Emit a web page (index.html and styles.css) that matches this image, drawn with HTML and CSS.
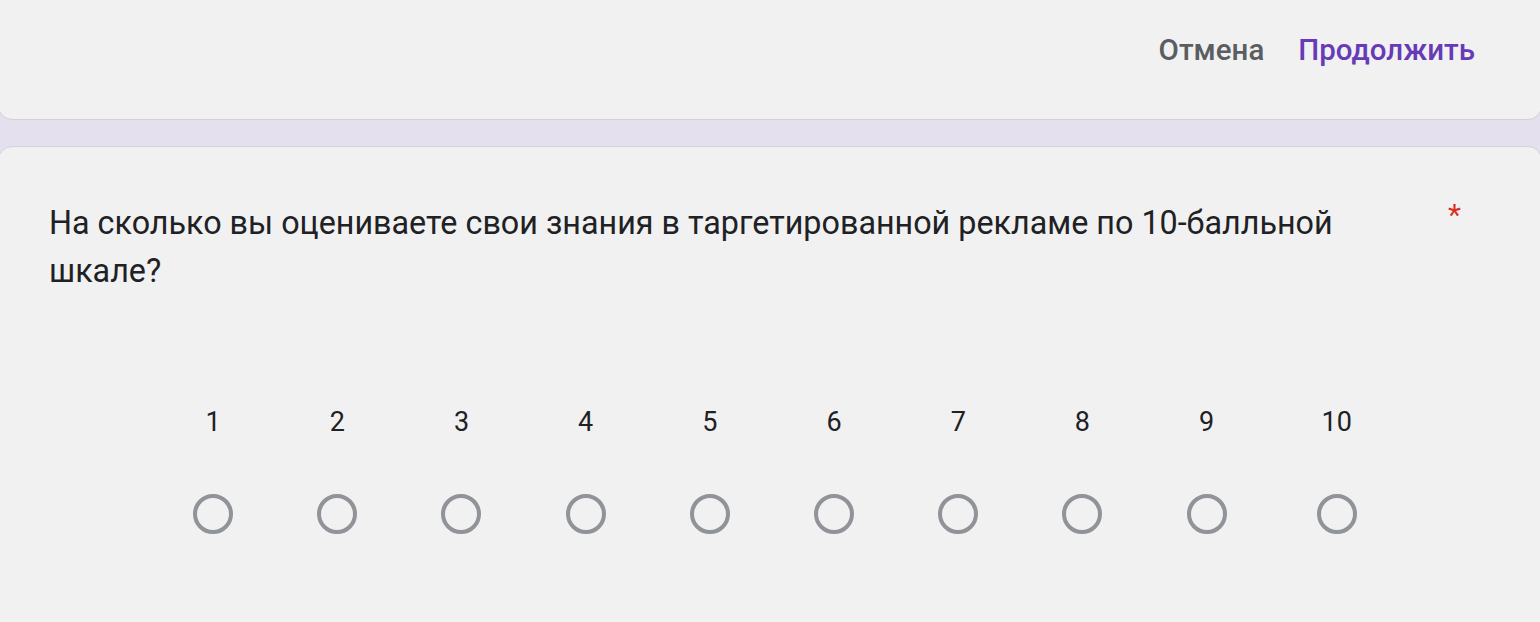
FILE: index.html
```html
<!DOCTYPE html>
<html lang="ru">
  <head>
    <meta charset="UTF-8" />
    <meta name="viewport" content="width=device-width, initial-scale=1.0" />
    <title>Форма</title>
    <link rel="stylesheet" href="styles.css">
  </head>
  <body>
    <div class="card dialog">
      <div class="actions">
        <button class="btn btn-cancel">Отмена</button>
        <button class="btn btn-next">Продолжить</button>
      </div>
    </div>

    <div class="card question">
      <div class="question-head">
        <div class="question-title">На сколько вы оцениваете свои знания в таргетированной рекламе по 10-балльной шкале?</div>
        <span class="required">*</span>
      </div>

      <div class="scale">
        <label class="scale-item"><span class="scale-num">1</span><span class="radio"></span></label>
        <label class="scale-item"><span class="scale-num">2</span><span class="radio"></span></label>
        <label class="scale-item"><span class="scale-num">3</span><span class="radio"></span></label>
        <label class="scale-item"><span class="scale-num">4</span><span class="radio"></span></label>
        <label class="scale-item"><span class="scale-num">5</span><span class="radio"></span></label>
        <label class="scale-item"><span class="scale-num">6</span><span class="radio"></span></label>
        <label class="scale-item"><span class="scale-num">7</span><span class="radio"></span></label>
        <label class="scale-item"><span class="scale-num">8</span><span class="radio"></span></label>
        <label class="scale-item"><span class="scale-num">9</span><span class="radio"></span></label>
        <label class="scale-item"><span class="scale-num">10</span><span class="radio"></span></label>
      </div>
    </div>
  </body>
</html>
```

FILE: styles.css
```css
body {
  font-family: "Roboto", "Noto Sans", sans-serif;
  background-color: #e4e0ed;
  color: #202124;
  margin: 0;
  height: 622px;
  overflow: hidden;
}
.card {
  background-color: #f1f1f1;
  border: 1px solid #d2d0d8;
  border-radius: 14px;
  margin: 0 -2px;
}
.dialog {
  margin-top: -20px;
  height: 140px;
  box-sizing: border-box;
}
.actions {
  display: flex;
  justify-content: flex-end;
  gap: 10px;
  padding: 44px 54px 0 0;
}
.btn {
  font-family: "Roboto", "Noto Sans", sans-serif;
  font-size: 29.5px;
  font-weight: 500;
  background: none;
  border: none;
  padding: 8px 12px;
  cursor: pointer;
}
.btn-cancel {
  color: #5a5d62;
}
.btn-next {
  color: #673ab7;
}
.question {
  margin-top: 26px;
  height: 520px;
  box-sizing: border-box;
  padding: 52px 0 0 50px;
}
.question-head {
  display: flex;
  align-items: flex-start;
  padding-right: 80px;
}
.question-title {
  flex: 1;
  max-width: 1330px;
  font-size: 32.3px;
  line-height: 48px;
}
.required {
  color: #d93025;
  font-size: 30px;
  line-height: 40px;
  margin-left: auto;
  margin-top: -4px;
}
.scale {
  display: flex;
  padding: 111px 0 0 102px;
}
.scale-item {
  width: 124.2px;
  display: flex;
  flex-direction: column;
  align-items: center;
  gap: 56px;
}
.scale-item:last-child {
  margin-left: 6px;
}
.scale-num {
  font-size: 27px;
  line-height: 32px;
}
.radio {
  width: 32px;
  height: 32px;
  border: 4px solid #909398;
  border-radius: 50%;
}
```
